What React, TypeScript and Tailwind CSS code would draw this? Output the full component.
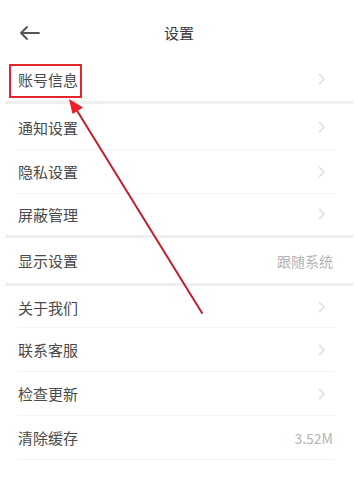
import React from "react"

type Row = { label: string; value?: string; h: string }

const font = { fontFamily: '"Noto Sans CJK SC", "Noto Sans", sans-serif' }

function Chevron() {
  return (
    <svg width="8" height="12" viewBox="0 0 8 12" className="mr-[7px]">
      <path d="M1.5 1.5 6 6l-4.5 4.5" fill="none" stroke="#d9d9d9" strokeWidth="1.3" strokeLinecap="round" strokeLinejoin="round" />
    </svg>
  )
}

function Item({ label, value, h }: Row) {
  return (
    <div className={`flex items-center justify-between pl-[18px] pr-[25px] ${h}`}>
      <span className="text-[15px] text-[#4a4a4a] leading-none">{label}</span>
      {value ? <span className="text-[14px] text-[#b3b3b3] leading-none">{value}</span> : <Chevron />}
    </div>
  )
}

const Thin = () => <div className="h-px ml-[18px] mr-[23px] bg-[#f3f3f3]" />
const Thick = () => <div className="h-[3px] mx-[5px] my-px bg-[#efefef]" />

export default function App() {
  return (
    <div className="relative w-[358px] h-[500px] bg-white overflow-hidden" style={font}>
      {/* header */}
      <div className="relative flex items-center justify-center h-[58px] pt-2">
        <svg width="22" height="16" viewBox="0 0 22 16" className="absolute left-[19px] top-[25px]">
          <path d="M20 8H2.5M8 2 2 8l6 6" fill="none" stroke="#555" strokeWidth="1.8" strokeLinecap="round" strokeLinejoin="round" />
        </svg>
        <span className="text-[15px] text-[#383838]">设置</span>
      </div>

      <Item label="账号信息" h="h-[42px]" />
      <Thick />
      <Item label="通知设置" h="h-[44px]" />
      <Thin />
      <Item label="隐私设置" h="h-[43px]" />
      <Thin />
      <Item label="屏蔽管理" h="h-[40px]" />
      <Thick />
      <Item label="显示设置" value="跟随系统" h="h-[43px]" />
      <Thick />
      <Item label="关于我们" h="h-[40px]" />
      <Thin />
      <Item label="联系客服" h="h-[43px]" />
      <Thin />
      <Item label="检查更新" h="h-[43px]" />
      <Thin />
      <Item label="清除缓存" value="3.52M" h="h-[43px]" />
      <Thin />

      {/* annotation overlay */}
      <div className="absolute left-[9px] top-[64px] w-[73px] h-[34px] border-2 border-[#e3262b]" />
      <svg width="358" height="500" className="absolute left-0 top-0 pointer-events-none">
        <line x1="202" y1="313" x2="76" y2="109" stroke="#c41d2a" strokeWidth="2" strokeLinecap="round" />
        <polygon points="69,99 72.5,114 83,107.5" fill="#ee1c24" />
      </svg>
    </div>
  )
}
